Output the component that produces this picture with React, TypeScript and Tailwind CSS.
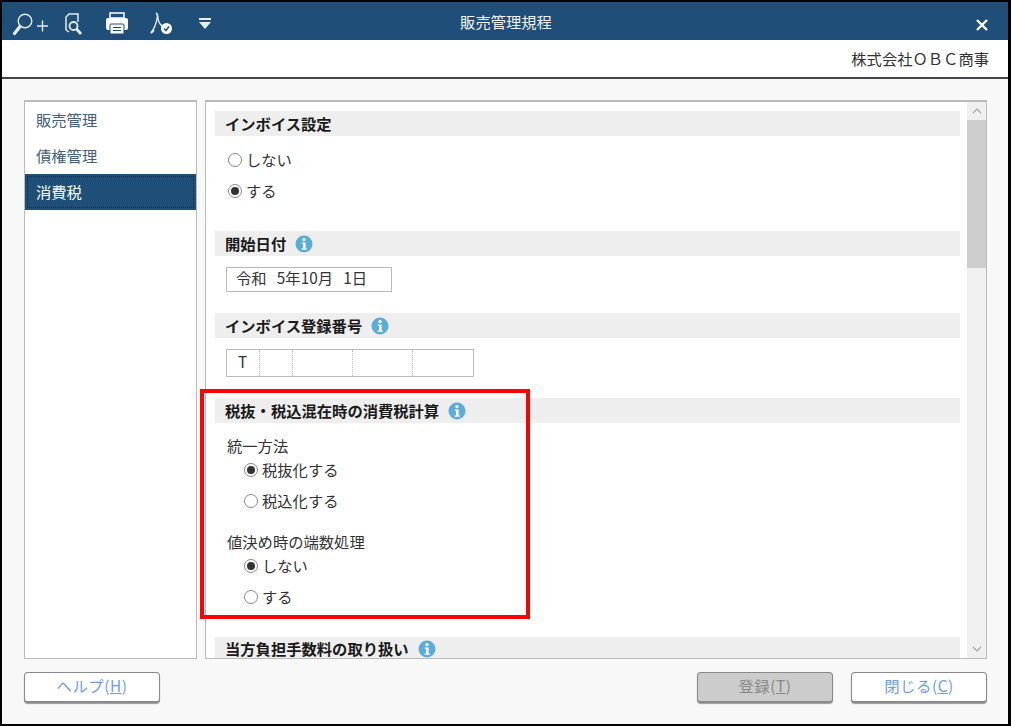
import React from "react";

const font = { fontFamily: '"Noto Sans CJK JP", "Noto Sans", sans-serif' };

function Info() {
  return (
    <svg width="18" height="18" viewBox="0 0 18 18" className="shrink-0">
      <circle cx="9" cy="9" r="8.500" fill="#5aaddb" />
      <circle cx="9" cy="4.600" r="1.700" fill="#fff" />
      <path d="M6.800 7.400h3.800v6h1.200v1.400H6.600v-1.400h1.400V8.800H6.800z" fill="#fff" />
    </svg>
  );
}

function Section({ title, info, className }: { title: string; info?: boolean; className?: string }) {
  return (
    <div className={`bg-[#eeeeee] flex items-center pl-[10px] gap-[9px] text-[15.3px] leading-none font-bold text-[#1a1a1a] ${className ?? "h-[25px]"}`}>
      <span>{title}</span>
      {info && <Info />}
    </div>
  );
}

function Radio({ label, checked, className }: { label: string; checked?: boolean; className?: string }) {
  return (
    <div className={`flex items-center h-[20px] gap-[4px] text-[15.3px] leading-none text-[#333] ${className ?? ""}`}>
      <span className="w-[14px] h-[14px] rounded-full border border-[#888] bg-white flex items-center justify-center shrink-0">
        {checked && <span className="w-[8px] h-[8px] rounded-full bg-[#333]" />}
      </span>
      <span>{label}</span>
    </div>
  );
}

function Btn({ children, disabled, className }: { children: React.ReactNode; disabled?: boolean; className?: string }) {
  return (
    <div
      className={`w-[136px] h-[31px] rounded-[4px] border border-[#8a8a8a] border-b-[2px] shadow-[0_1px_1px_#999] flex items-center justify-center pb-[3px] text-[15.3px] tracking-[0.6px] ${
        disabled ? "bg-[#cccccc] text-[#888888]" : "bg-white text-[#6f9cf5]"
      } ${className ?? ""}`}
    >
      <span>{children}</span>
    </div>
  );
}

export default function App() {
  return (
    <div style={font} className="relative w-[1011px] h-[726px] bg-black pt-[2px] pl-[2px] pr-[3px] pb-[2px] overflow-hidden">
      <div className="h-full flex flex-col bg-[#f8f8f8]">
        {/* title bar */}
        <div className="h-[38px] shrink-0 bg-[#1f4e79] flex items-center relative text-white">
          <div className="flex items-center h-full">
            <svg width="38" height="26" viewBox="0 0 38 26" className="ml-[9px] mt-[6px]" fill="none" stroke="#e4ebf2">
              <circle cx="14" cy="10" r="6.800" strokeWidth="1.400" />
              <path d="M9 15.500L3.500 22.500" strokeWidth="3.200" strokeLinecap="round" />
              <path d="M26 15h11M31.500 9.500v11" strokeWidth="1.400" />
            </svg>
            <svg width="20" height="24" viewBox="0 0 20 24" className="ml-[14px] mt-[6px]" fill="none" stroke="#e4ebf2" strokeWidth="1.500">
              <path d="M3 18V5l3-3h9v8" />
              <path d="M3 18l3 2" />
              <circle cx="10.500" cy="14" r="4" strokeWidth="1.800" />
              <path d="M13.500 17l4.500 5" strokeWidth="2.800" />
            </svg>
            <svg width="24" height="24" viewBox="0 0 24 24" className="ml-[22px] mt-[4px]">
              <path d="M5 2h14v5H5z" fill="none" stroke="#fff" strokeWidth="1.500" />
              <rect x="1" y="7" width="22" height="12" rx="2" fill="#fff" />
              <rect x="5" y="13" width="14" height="10" rx="1" fill="#fff" stroke="#1f4e79" strokeWidth="1" />
              <path d="M8 16.500h8M8 19.500h8" stroke="#1f4e79" strokeWidth="1.200" />
            </svg>
            <svg width="24" height="24" viewBox="0 0 24 24" className="ml-[21px] mt-[4px]" fill="none">
              <path d="M1 22c3-4 5-9 6-14 .4-2 .2-5-1-6 2 .500 2 4 2 6 1 4 3 7 6 8" stroke="#e4ebf2" strokeWidth="1.300" />
              <path d="M1 22l3-3" stroke="#e4ebf2" strokeWidth="2" />
              <circle cx="16.500" cy="17.500" r="5.500" fill="#fff" />
              <path d="M14 17.500l2 2 3-4" stroke="#1f4e79" strokeWidth="1.500" fill="none" />
            </svg>
            <svg width="14" height="14" viewBox="0 0 14 14" className="ml-[24px] mt-[6px]">
              <path d="M1 1h12v2H1z M1 5h12L7 12z" fill="#e8eef4" />
            </svg>
          </div>
          <div className="absolute inset-y-0 left-[2px] right-0 flex items-center justify-center text-[15.3px] text-[#f2f2f2] pointer-events-none">
            販売管理規程
          </div>
          <svg width="12" height="12" viewBox="0 0 12 12" className="absolute left-[974px] top-[17px]" stroke="#fff" strokeWidth="2.400">
            <path d="M1 1l10 10M11 1L1 11" />
          </svg>
        </div>

        {/* company row */}
        <div className="h-[39px] shrink-0 bg-white border-b-2 border-[#444] flex items-center justify-end pr-[19px] text-[15.3px] text-[#333]">
          株式会社ＯＢＣ商事
        </div>

        {/* body */}
        <div className="flex-1 min-h-0 flex flex-col pl-[22px] pr-[21px] pt-[21px]">
          <div className="h-[559px] flex gap-[8px]">
            {/* sidebar */}
            <div className="w-[173px] shrink-0 bg-white border border-[#bbbbbb] border-t-2 text-[15.3px] leading-none text-[#44607a]">
              <div className="h-[36px] flex items-center pl-[11px]">販売管理</div>
              <div className="h-[36px] flex items-center pl-[11px]">債権管理</div>
              <div className="h-[36px] bg-[#1f4e79] text-white p-[2px]">
                <div className="h-full flex items-center pl-[8px] border border-dotted border-[#0d2b47]">消費税</div>
              </div>
            </div>

            {/* main panel */}
            <div className="flex-1 min-w-0 flex bg-white border border-[#bbbbbb] border-t-2 overflow-hidden">
              <div className="flex-1 min-w-0 pl-[9px] pr-[7px] pt-[9px] overflow-hidden text-[15.3px] leading-none text-[#333]">
                <Section title="インボイス設定" />
                <Radio label="しない" className="mt-[14px] ml-[13px]" />
                <Radio checked label="する" className="mt-[11px] ml-[13px]" />

                <Section title="開始日付" info className="h-[25px] mt-[30px]" />
                <div className="mt-[11px] ml-[11px] w-[166px] h-[25px] border border-[#bbbbbb] flex items-center pl-[9px] pb-[3px]">
                  令和&nbsp;&nbsp;&nbsp;5年10月&nbsp;&nbsp;&nbsp;1日
                </div>

                <Section title="インボイス登録番号" info className="h-[25px] mt-[21px]" />
                <div className="mt-[11px] ml-[11px] w-[248px] h-[28px] border border-[#bbbbbb] flex items-center">
                  <div className="w-[33px] h-full flex items-center pl-[11px] pb-[3px] border-r border-dotted border-[#bbbbbb]">T</div>
                  <div className="w-[33px] h-full border-r border-dotted border-[#bbbbbb]" />
                  <div className="w-[60px] h-full border-r border-dotted border-[#bbbbbb]" />
                  <div className="w-[60px] h-full border-r border-dotted border-[#bbbbbb]" />
                </div>

                <Section title="税抜・税込混在時の消費税計算" info className="h-[25px] mt-[21px]" />
                <div className="mt-[14px] ml-[12px] h-[20px] flex items-center pb-[3px]">統一方法</div>
                <Radio checked label="税抜化する" className="mt-[3px] ml-[29px]" />
                <Radio label="税込化する" className="mt-[11px] ml-[29px]" />
                <div className="mt-[21px] ml-[12px] h-[20px] flex items-center">値決め時の端数処理</div>
                <Radio checked label="しない" className="mt-[4px] ml-[29px]" />
                <Radio label="する" className="mt-[11px] ml-[29px]" />

                <Section title="当方負担手数料の取り扱い" info className="h-[21px] pt-[3px] mt-[30px]" />
              </div>

              {/* scrollbar */}
              <div className="w-[19px] shrink-0 bg-[#f0f0f0] flex flex-col">
                <div className="h-[18px] flex items-center justify-center">
                  <svg width="10" height="6" viewBox="0 0 10 6" fill="none" stroke="#a3a3a3" strokeWidth="1.200">
                    <path d="M1 5l4-4 4 4" />
                  </svg>
                </div>
                <div className="h-[148px] bg-[#cdcdcd]" />
                <div className="flex-1" />
                <div className="h-[18px] flex items-center justify-center">
                  <svg width="10" height="6" viewBox="0 0 10 6" fill="none" stroke="#a3a3a3" strokeWidth="1.200">
                    <path d="M1 1l4 4 4-4" />
                  </svg>
                </div>
              </div>
            </div>
          </div>

          {/* footer */}
          <div className="mt-[13px] flex items-start">
            <Btn>
              ヘルプ(<span className="underline">H</span>)
            </Btn>
            <div className="flex-1" />
            <Btn disabled>
              登録(<span className="underline">T</span>)
            </Btn>
            <Btn className="ml-[18px]">
              閉じる(<span className="underline">C</span>)
            </Btn>
          </div>
        </div>
      </div>

      {/* red annotation */}
      <div className="absolute left-[200px] top-[389px] w-[330px] h-[230px] border-[4px] border-[#ff0000] pointer-events-none" />
    </div>
  );
}
